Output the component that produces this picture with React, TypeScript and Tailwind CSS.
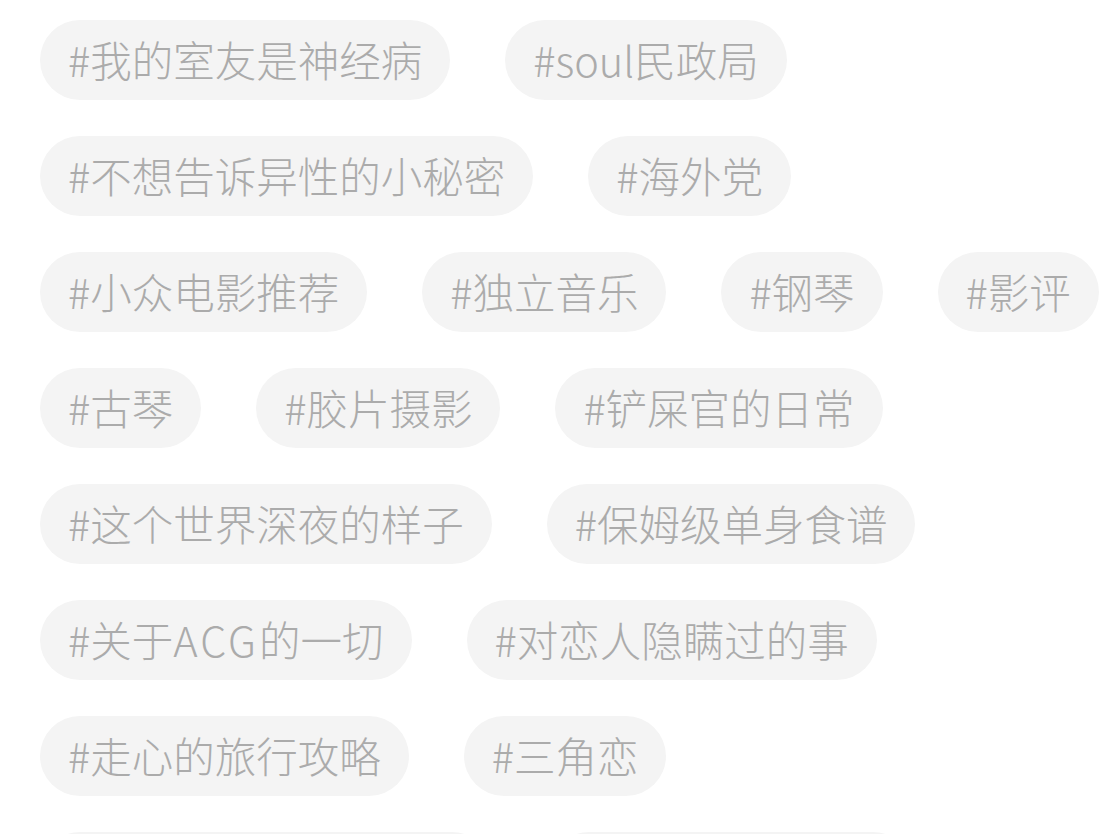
import React from "react";

const rows: React.ReactNode[][] = [
  ["#我的室友是神经病", "#soul民政局"],
  ["#不想告诉异性的小秘密", "#海外党"],
  ["#小众电影推荐", "#独立音乐", "#钢琴", "#影评"],
  ["#古琴", "#胶片摄影", "#铲屎官的日常"],
  ["#这个世界深夜的样子", "#保姆级单身食谱"],
  [
    <>
      #关于<span className="tracking-[3px]">ACG</span>的一切
    </>,
    "#对恋人隐瞒过的事",
  ],
  ["#走心的旅行攻略", "#三角恋"],
];

export default function App() {
  return (
    <div
      className="w-[1117px] h-[834px] overflow-hidden bg-white pl-[40px] pt-[20px] flex flex-col gap-[36px]"
      style={{ fontFamily: '"Noto Sans CJK SC", "Noto Sans", sans-serif' }}
    >
      {rows.map((row, i) => (
        <div key={i} className="flex gap-[55px] shrink-0">
          {row.map((t, j) => (
            <div
              key={j}
              className="h-[80px] shrink-0 rounded-full bg-[#f4f4f4] px-[28px] flex items-center whitespace-nowrap text-[41.5px] font-light leading-none text-[#ababab]"
            >
              {t}
            </div>
          ))}
        </div>
      ))}
      <div className="flex gap-[57px] shrink-0">
        <div className="h-[80px] w-[452px] shrink-0 rounded-full bg-[#f4f4f4]" />
        <div className="h-[80px] w-[364px] shrink-0 rounded-full bg-[#f4f4f4]" />
      </div>
    </div>
  );
}
